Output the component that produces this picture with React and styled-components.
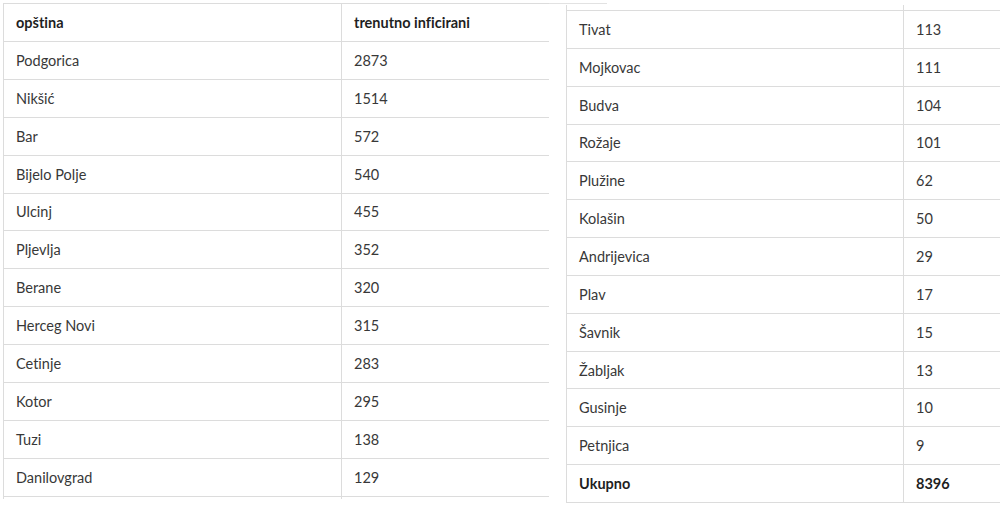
import React from 'react';
import styled, { createGlobalStyle } from 'styled-components';

const GlobalStyle = createGlobalStyle`
  html, body {
    margin: 0;
    padding: 0;
    background: #ffffff;
  }
  body {
    font-family: Lato, "Open Sans", "Liberation Sans", sans-serif;
    font-variant-ligatures: none;
    width: 1000px;
    height: 530px;
    overflow: hidden;
  }
`;

const Page = styled.div`
  display: flex;
  align-items: flex-start;
  padding: 3px 0 0 3px;
`;

const LeftShot = styled.div`
  width: 546px;
  flex: none;
`;

const RightShot = styled.div`
  flex: 1;
  display: flex;
  flex-direction: column;
`;

// leftover edge of the first screenshot's top border
const Strip = styled.div`
  width: 58px;
  height: 1px;
  background: #e2e2e2;
  margin-bottom: 1px;
`;

const RightBody = styled.div`
  padding-left: 17px;
  background: #ffffff;
`;

const Table = styled.div`
  display: grid;
  grid-template-columns: ${({ first }) => first}px 1fr;
  border-left: 1px solid #dcdcdc;
  border-top: ${({ noTop }) => (noTop ? 'none' : '1px solid #dcdcdc')};
`;

const Cell = styled.div`
  box-sizing: border-box;
  height: ${({ h }) => h}px;
  display: flex;
  align-items: center;
  padding-left: 12px;
  border-bottom: 1px solid #dcdcdc;
  border-right: ${({ last }) => (last ? 'none' : '1px solid #dcdcdc')};
  font-size: 14.5px;
  color: ${({ bold }) => (bold ? '#1f1f1f' : '#383838')};
  font-weight: ${({ bold }) => (bold ? 700 : 400)};
  white-space: nowrap;
`;

// cropped tail of the column lines above / below a table
const Stub = styled.div`
  height: ${({ h }) => h}px;
  border-right: ${({ last }) => (last ? 'none' : '1px solid #dcdcdc')};
`;

const left = [
  ['opština', 'trenutno inficirani', true],
  ['Podgorica', '2873'],
  ['Nikšić', '1514'],
  ['Bar', '572'],
  ['Bijelo Polje', '540'],
  ['Ulcinj', '455'],
  ['Pljevlja', '352'],
  ['Berane', '320'],
  ['Herceg Novi', '315'],
  ['Cetinje', '283'],
  ['Kotor', '295'],
  ['Tuzi', '138'],
  ['Danilovgrad', '129'],
];

const right = [
  ['Tivat', '113'],
  ['Mojkovac', '111'],
  ['Budva', '104'],
  ['Rožaje', '101'],
  ['Plužine', '62'],
  ['Kolašin', '50'],
  ['Andrijevica', '29'],
  ['Plav', '17'],
  ['Šavnik', '15'],
  ['Žabljak', '13'],
  ['Gusinje', '10'],
  ['Petnjica', '9'],
  ['Ukupno', '8396', true],
];

function Row({ name, value, bold, h }) {
  return (
    <>
      <Cell bold={bold} h={h}>
        {name}
      </Cell>
      <Cell bold={bold} h={h} last>
        {value}
      </Cell>
    </>
  );
}

export default function App() {
  return (
    <>
      <GlobalStyle />
      <Page>
        <LeftShot>
          <Table first={338}>
            {left.map(([n, v, b]) => (
              <Row key={n} name={n} value={v} bold={b} h={37.92} />
            ))}
            <Stub h={2} />
            <Stub h={2} last />
          </Table>
        </LeftShot>
        <RightShot>
          <Strip />
          <RightBody>
            <Table first={337} noTop>
              <Stub h={5} />
              <Stub h={5} last />
            </Table>
            <Table first={337}>
              {right.map(([n, v, b]) => (
                <Row key={n} name={n} value={v} bold={b} h={37.85} />
              ))}
            </Table>
          </RightBody>
        </RightShot>
      </Page>
    </>
  );
}
